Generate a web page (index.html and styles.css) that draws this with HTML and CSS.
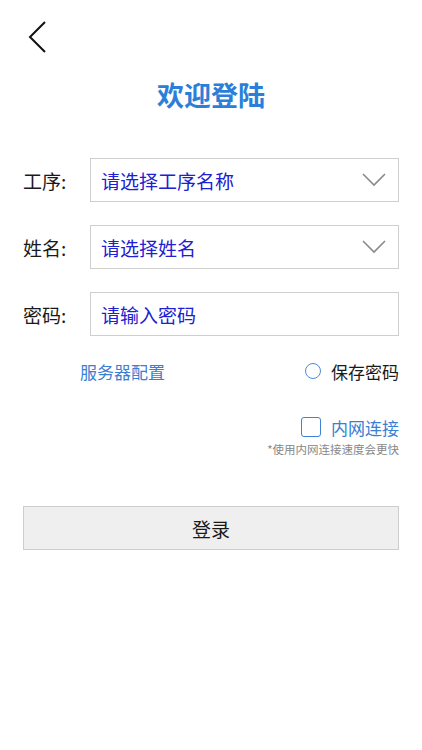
FILE: index.html
```html
<!DOCTYPE html>
<html lang="zh">
<head>
<meta charset="utf-8">
<title>欢迎登陆</title>
<link rel="stylesheet" href="styles.css">
</head>
<body>
<div class="page">
  <div class="topbar">
    <svg class="back" width="24" height="34" viewBox="0 0 24 34">
      <polyline points="17,1 2,16 17,31" fill="none" stroke="#111" stroke-width="2"/>
    </svg>
  </div>
  <h1 class="title">欢迎登陆</h1>

  <div class="form">
    <div class="row">
      <span class="label">工序:</span>
      <div class="box">
        <span class="placeholder">请选择工序名称</span>
        <svg class="caret" width="24" height="14" viewBox="0 0 24 14"><polyline points="1,1 12,12 23,1" fill="none" stroke="#8a8a8a" stroke-width="1.6"/></svg>
      </div>
    </div>
    <div class="row">
      <span class="label">姓名:</span>
      <div class="box">
        <span class="placeholder">请选择姓名</span>
        <svg class="caret" width="24" height="14" viewBox="0 0 24 14"><polyline points="1,1 12,12 23,1" fill="none" stroke="#8a8a8a" stroke-width="1.6"/></svg>
      </div>
    </div>
    <div class="row">
      <span class="label">密码:</span>
      <div class="box">
        <span class="placeholder">请输入密码</span>
      </div>
    </div>
  </div>

  <div class="links">
    <span class="server">服务器配置</span>
    <span class="save"><span class="radio"></span>保存密码</span>
  </div>

  <div class="intranet">
    <span class="check"></span>内网连接
  </div>
  <div class="note">*使用内网连接速度会更快</div>

  <div class="btn">登录</div>
</div>
</body>
</html>
```

FILE: styles.css
```css
* { box-sizing: border-box; }
html, body { margin: 0; padding: 0; background: #fff; }
body {
  font-family: "Noto Sans CJK SC", "Noto Sans", sans-serif;
  color: #111;
}
.page {
  width: 422px;
  padding: 0 23px;
}
.topbar {
  height: 75px;
  padding-top: 21px;
  padding-left: 5px;
}
.back { display: block; }
.title {
  margin: 0;
  height: 40px;
  line-height: 40px;
  text-align: center;
  font-size: 27px;
  font-weight: 700;
  color: #2b7fd8;
}
.form {
  margin-top: 43px;
  display: flex;
  flex-direction: column;
  gap: 23px;
}
.row {
  display: flex;
  align-items: center;
  height: 44px;
}
.label {
  width: 67px;
  font-size: 19px;
  color: #1a1a1a;
  flex-shrink: 0;
}
.box {
  flex: 1;
  height: 44px;
  border: 1.5px solid #cfcfcf;
  display: flex;
  align-items: center;
  justify-content: space-between;
  padding: 0 11px 0 10px;
}
.placeholder {
  font-size: 19px;
  color: #2020d2;
}
.caret { display: block; margin-right: 1px; }
.links {
  margin-top: 23px;
  height: 24px;
  display: flex;
  align-items: center;
  justify-content: space-between;
  padding-left: 57px;
  font-size: 17px;
}
.server { color: #3a80d2; }
.save {
  display: flex;
  align-items: center;
  color: #1a1a1a;
}
.radio {
  width: 16px;
  height: 16px;
  border: 1.5px solid #4a8ad8;
  border-radius: 50%;
  margin-right: 10px;
}
.intranet {
  margin-top: 32px;
  height: 24px;
  display: flex;
  align-items: center;
  justify-content: flex-end;
  font-size: 17px;
  color: #3a80d2;
}
.check {
  width: 20px;
  height: 20px;
  border: 1.5px solid #3f84d4;
  border-radius: 3px;
  margin-right: 10px;
}
.note {
  margin-top: 3px;
  height: 14px;
  line-height: 14px;
  text-align: right;
  font-size: 11.5px;
  color: #888;
}
.btn {
  margin-top: 50px;
  height: 44px;
  border: 1.5px solid #cdcdcd;
  background: #efefef;
  display: flex;
  align-items: center;
  justify-content: center;
  font-size: 19px;
  color: #1a1a1a;
}
```
